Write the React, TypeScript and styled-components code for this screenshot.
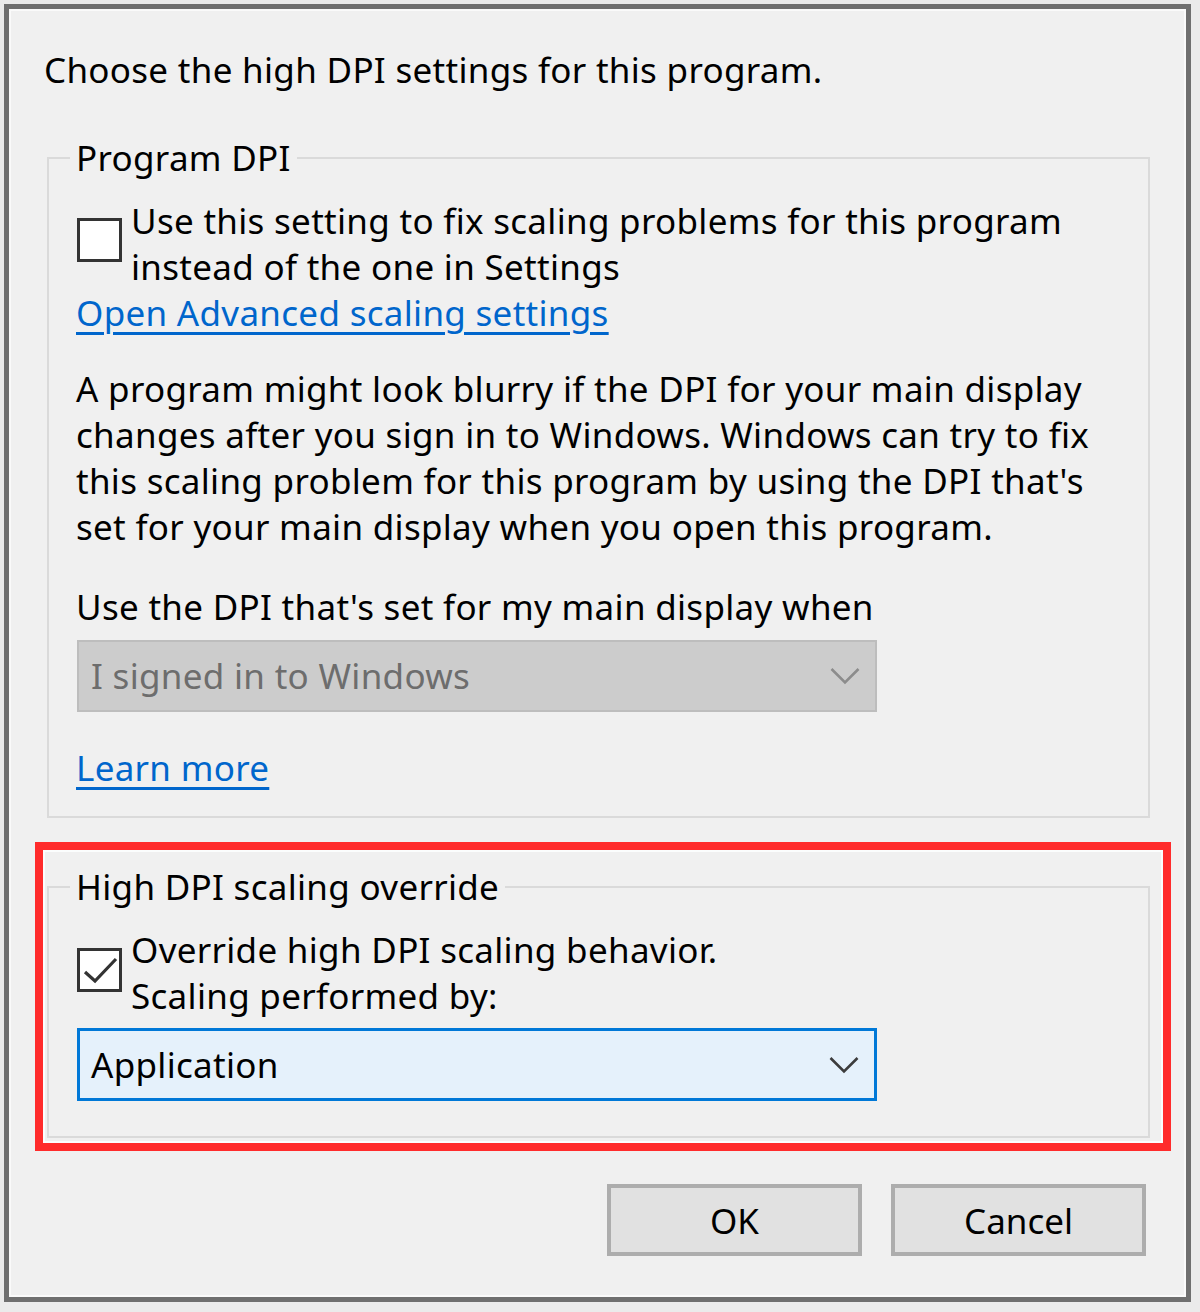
import React from 'react';
import styled, { createGlobalStyle } from 'styled-components';

const GlobalStyle = createGlobalStyle`
  html, body {
    margin: 0;
    padding: 0;
    background: #ebebeb;
  }
  body {
    font-family: "Noto Sans", "Open Sans", "Liberation Sans", sans-serif;
  }
`;

const Dialog = styled.div`
  box-sizing: border-box;
  margin: 4px 0 0 4px;
  width: 1187px;
  height: 1298px;
  background: #f0f0f0;
  border: 5px solid #6f6f6f;
  box-shadow: inset 0 0 0 2px #fafafa;
  padding: 38px 36px 0 35px;
  display: flex;
  flex-direction: column;
  font-size: 35px;
  letter-spacing: 0.3px;
  line-height: 46px;
  color: #000;
`;

const Title = styled.div`
  white-space: nowrap;
`;

const Group = styled.fieldset<{ $gap: number; $bottom: number }>`
  margin: ${(p) => p.$gap}px 0 0 3px;
  min-width: 0;
  border: 2px solid #dadada;
  padding: 0 0 ${(p) => p.$bottom}px 27px;
  display: flex;
  flex-direction: column;
  align-items: flex-start;
`;

const Legend = styled.legend`
  padding: 0 6px;
  margin-left: -6px;
  line-height: 46px;
  white-space: nowrap;
`;

const CheckRow = styled.div`
  display: flex;
  align-items: flex-start;
  margin-top: 17px;
`;

const Box = styled.div<{ $top: number }>`
  box-sizing: border-box;
  flex: none;
  width: 45px;
  height: 44px;
  margin: ${(p) => p.$top}px 9px 0 1px;
  border: 3px solid #333;
  background: #fff;
  display: flex;
  align-items: center;
  justify-content: center;
`;

const CheckText = styled.div`
  white-space: nowrap;
`;

const Link = styled.a<{ $top?: number }>`
  display: block;
  margin-top: ${(p) => p.$top ?? 0}px;
  color: #0066cc;
  text-decoration: underline;
  text-decoration-thickness: 3px;
  text-underline-offset: 6px;
  white-space: nowrap;
  cursor: pointer;
`;

const Para = styled.p<{ $top: number }>`
  margin: ${(p) => p.$top}px 0 0 0;
  white-space: nowrap;
`;

const Select = styled.div<{ $active?: boolean; $top: number }>`
  box-sizing: border-box;
  width: 800px;
  height: ${(p) => (p.$active ? 73 : 72)}px;
  margin: ${(p) => p.$top}px 0 0 1px;
  padding: 0 15px 0 ${(p) => (p.$active ? 11 : 12)}px;
  display: flex;
  align-items: center;
  justify-content: space-between;
  background: ${(p) => (p.$active ? '#e5f1fb' : '#cccccc')};
  border: ${(p) => (p.$active ? '3px solid #0078d7' : '2px solid #bdbdbd')};
  color: ${(p) => (p.$active ? '#000' : '#6d6d6d')};
`;

const Highlight = styled.div`
  margin: 24px -21px 0 -9px;
  border: 8px solid #ff2b2b;
  padding: 14px 13px 5px 1px;
  box-shadow: inset 0 0 0 2px #fbfdfd;
`;

const Buttons = styled.div`
  display: flex;
  justify-content: flex-end;
  gap: 29px;
  margin-top: 33px;
  padding-right: 4px;
`;

const Button = styled.button`
  box-sizing: border-box;
  width: 255px;
  height: 72px;
  background: #e1e1e1;
  border: 4px solid #adadad;
  font: inherit;
  color: #000;
  padding: 2px 0 0 0;
`;

function Chevron({ color }: { color: string }) {
  return (
    <svg width="30" height="18" viewBox="0 0 30 18">
      <polyline points="1.5,2 15,15.5 28.5,2" fill="none" stroke={color} strokeWidth="2.6" />
    </svg>
  );
}

function Check() {
  return (
    <svg width="39" height="38" viewBox="0 0 39 38" style={{ display: 'block' }}>
      <polyline points="5,21 15,30 36,8" fill="none" stroke="#333" strokeWidth="3.2" />
    </svg>
  );
}

export default function App() {
  return (
    <>
      <GlobalStyle />
      <Dialog>
        <Title>Choose the high DPI settings for this program.</Title>

        <Group $gap={42} $bottom={25}>
          <Legend>Program DPI</Legend>
          <CheckRow>
            <Box $top={20} />
            <CheckText>
              Use this setting to fix scaling problems for this program
              <br />
              instead of the one in Settings
            </CheckText>
          </CheckRow>
          <Link>Open Advanced scaling settings</Link>
          <Para $top={30}>
            A program might look blurry if the DPI for your main display
            <br />
            changes after you sign in to Windows. Windows can try to fix
            <br />
            this scaling problem for this program by using the DPI that's
            <br />
            set for your main display when you open this program.
          </Para>
          <Para $top={34}>Use the DPI that's set for my main display when</Para>
          <Select $top={10}>
            <span>I signed in to Windows</span>
            <Chevron color="#8c8c8c" />
          </Select>
          <Link $top={33}>Learn more</Link>
        </Group>

        <Highlight>
          <Group $gap={0} $bottom={35}>
            <Legend>High DPI scaling override</Legend>
            <CheckRow>
              <Box $top={21}>
                <Check />
              </Box>
              <CheckText>
                Override high DPI scaling behavior.
                <br />
                Scaling performed by:
              </CheckText>
            </CheckRow>
            <Select $active $top={9}>
              <span>Application</span>
              <Chevron color="#3c3c3c" />
            </Select>
          </Group>
        </Highlight>

        <Buttons>
          <Button>OK</Button>
          <Button>Cancel</Button>
        </Buttons>
      </Dialog>
    </>
  );
}
